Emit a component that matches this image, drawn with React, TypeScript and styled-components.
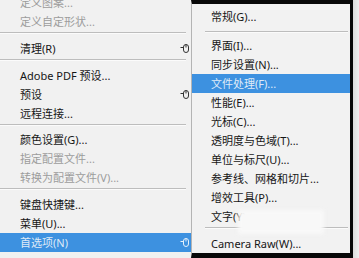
import React from "react";
import styled, { createGlobalStyle } from "styled-components";

const Global = createGlobalStyle`
  html, body { margin: 0; padding: 0; background: #ececec; }
  body { font-family: "Noto Sans", "Noto Sans CJK SC", sans-serif; }
`;

const Screen = styled.div`
  width: 359px;
  height: 258px;
  display: flex;
  overflow: hidden;
  background: #ececec;
`;

const LeftMenu = styled.div`
  width: 191px;
  flex: none;
  background: #f1f1f1;
  overflow: hidden;
  display: flex;
  flex-direction: column;
`;

const LeftList = styled.div`
  margin-top: -7px;
  display: flex;
  flex-direction: column;
`;

const SubMenu = styled.div`
  position: relative;
  width: 158px;
  flex: none;
  background: #f2f2f2;
  border-left: 1px solid #b4b4b4;
  border-top: 4px solid #080808;
  border-right: 3px solid #080808;
  border-bottom: 5px solid #080808;
  padding-top: 3px;
  display: flex;
  flex-direction: column;
`;

const Item = styled.div<{ $disabled?: boolean; $active?: boolean; $pad: number }>`
  height: 19px;
  flex: none;
  display: flex;
  align-items: center;
  justify-content: space-between;
  padding: 0 1px 0 ${(p) => p.$pad}px;
  font-size: 11px;
  line-height: 19px;
  white-space: nowrap;
  color: ${(p) => (p.$active ? "#dfeaf7" : p.$disabled ? "#9c9c9c" : "#161616")};
  background: ${(p) => (p.$active ? "#3d91e0" : "transparent")};
`;

const Sep = styled.div<{ $h: number; $top: number; $left: number; $right: number }>`
  height: ${(p) => p.$h}px;
  flex: none;
  padding: ${(p) => p.$top}px ${(p) => p.$right}px 0 ${(p) => p.$left}px;
  box-sizing: border-box;
  &::after {
    content: "";
    display: block;
    height: 1px;
    background: #bdbdbd;
    border-bottom: 1px solid #fbfbfb;
  }
`;

const Blob = styled.div`
  position: absolute;
  left: 46px;
  top: 206px;
  width: 86px;
  height: 24px;
  background: #f8f8f8;
  filter: blur(2px);
`;

const EdgeStrip = styled.div`
  flex: 1;
  background: linear-gradient(90deg, #dcdcdc, #f0f0f0);
`;

const Mouse = ({ color }: { color: string }) => (
  <svg width="10" height="11" viewBox="0 0 10 11" fill="none">
    <path d="M0.5 4.5H3" stroke={color} strokeWidth="1" />
    <rect x="3.5" y="1.5" width="5" height="8" rx="2.5" stroke={color} strokeWidth="1" />
    <path d="M6 1.5V4.5" stroke={color} strokeWidth="1" />
  </svg>
);

type Entry =
  | { sep: true }
  | { label: string; disabled?: boolean; active?: boolean; sub?: boolean };

const leftItems: Entry[] = [
  { label: "定义图案...", disabled: true },
  { label: "定义自定形状...", disabled: true },
  { sep: true },
  { label: "清理(R)", sub: true },
  { sep: true },
  { label: "Adobe PDF 预设..." },
  { label: "预设", sub: true },
  { label: "远程连接..." },
  { sep: true },
  { label: "颜色设置(G)..." },
  { label: "指定配置文件...", disabled: true },
  { label: "转换为配置文件(V)...", disabled: true },
  { sep: true },
  { label: "键盘快捷键..." },
  { label: "菜单(U)..." },
  { label: "首选项(N)", active: true, sub: true },
];

const rightItems: Entry[] = [
  { label: "常规(G)..." },
  { sep: true },
  { label: "界面(I)..." },
  { label: "同步设置(N)..." },
  { label: "文件处理(F)...", active: true },
  { label: "性能(E)..." },
  { label: "光标(C)..." },
  { label: "透明度与色域(T)..." },
  { label: "单位与标尺(U)..." },
  { label: "参考线、网格和切片..." },
  { label: "增效工具(P)..." },
  { label: "文字(Y)..." },
  { sep: true },
  { label: "Camera Raw(W)..." },
];

export default function App() {
  return (
    <>
      <Global />
      <Screen>
        <LeftMenu>
          <LeftList>
            {leftItems.map((it, i) =>
              "sep" in it ? (
                <Sep key={i} $h={i === 2 ? 8 : 7.6} $top={1} $left={0} $right={5} />
              ) : (
                <Item key={i} $pad={20} $disabled={it.disabled} $active={it.active}>
                  <span>{it.label}</span>
                  {it.sub && <Mouse color={it.active ? "#e6f0fa" : "#333"} />}
                </Item>
              )
            )}
          </LeftList>
        </LeftMenu>
        <SubMenu>
          {rightItems.map((it, i) =>
            "sep" in it ? (
              <Sep key={i} $h={i === 1 ? 10 : 8} $top={i === 1 ? 5 : 1} $left={13} $right={2} />
            ) : (
              <Item key={i} $pad={19} $disabled={it.disabled} $active={it.active}>
                <span>{it.label}</span>
              </Item>
            )
          )}
          <Blob />
        </SubMenu>
        <EdgeStrip />
      </Screen>
    </>
  );
}
